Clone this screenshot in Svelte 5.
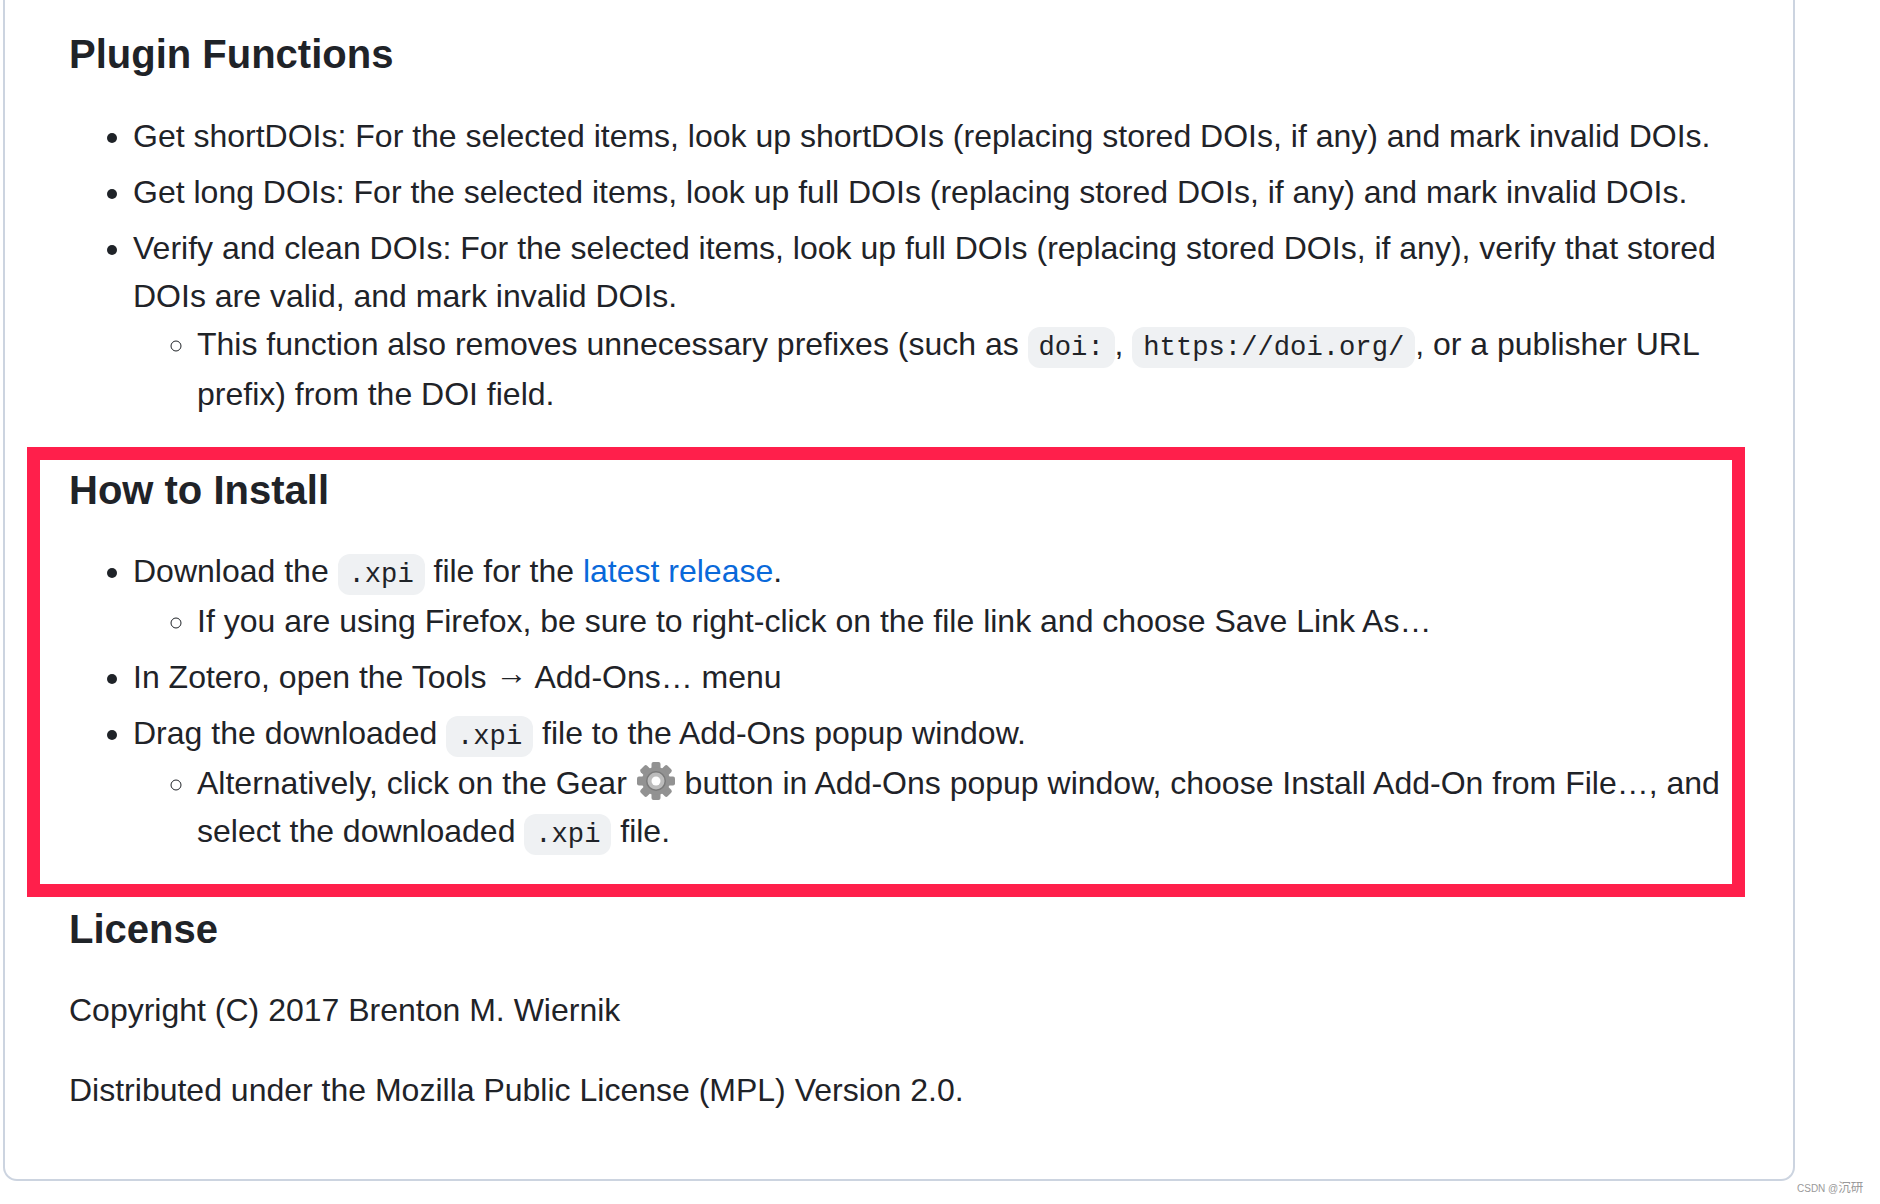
<script>
	// teeth of the gear icon, rotated around its centre
	const teeth = [0, 45, 90, 135, 180, 225, 270, 315];
</script>

<div class="page">
	<article class="card">
		<h2 class="first">Plugin Functions</h2>
		<ul>
			<li>Get shortDOIs: For the selected items, look up shortDOIs (replacing stored DOIs, if any) and mark invalid DOIs.</li>
			<li>Get long DOIs: For the selected items, look up full DOIs (replacing stored DOIs, if any) and mark invalid DOIs.</li>
			<li>
				Verify and clean DOIs: For the selected items, look up full DOIs (replacing stored DOIs, if any), verify that stored DOIs are valid, and mark invalid DOIs.
				<ul>
					<li>This function also removes unnecessary prefixes (such as <code>doi:</code>, <code>https://doi.org/</code>, or a publisher URL prefix) from the DOI field.</li>
				</ul>
			</li>
		</ul>

		<h2>How to Install</h2>
		<ul>
			<li>
				Download the <code>.xpi</code> file for the <a href="#latest">latest release</a>.
				<ul>
					<li>If you are using Firefox, be sure to right-click on the file link and choose Save Link As…</li>
				</ul>
			</li>
			<li>In Zotero, open the Tools <span class="arrow">→</span> Add-Ons… menu</li>
			<li>
				Drag the downloaded <code>.xpi</code> file to the Add-Ons popup window.
				<ul>
					<li>
						Alternatively, click on the Gear
						<svg class="gear" viewBox="0 0 40 40" aria-hidden="true">
							{#each teeth as a}
								<rect x="15.5" y="1" width="9" height="9" rx="2" fill="#929292" transform="rotate({a} 20 20)" />
							{/each}
							<circle cx="20" cy="20" r="14" fill="#929292" />
							<circle cx="20" cy="20" r="10" fill="#7a7a7a" />
							<circle cx="20" cy="20" r="8.5" fill="#bcbcbc" />
							<circle cx="20" cy="20" r="4.5" fill="#fff" />
						</svg>
						button in Add-Ons popup window, choose Install Add-On from File…, and select the downloaded <code>.xpi</code> file.
					</li>
				</ul>
			</li>
		</ul>

		<h2>License</h2>
		<p>Copyright (C) 2017 Brenton M. Wiernik</p>
		<p>Distributed under the Mozilla Public License (MPL) Version 2.0.</p>
	</article>
	<div class="highlight"></div>
	<span class="watermark">CSDN @<span class="cjk">沉研</span></span>
</div>

<style>
	:global(body) {
		background: #fff;
	}

	.page {
		position: relative;
		height: 1204px;
		overflow: hidden;
		font-family: 'Liberation Sans', Arial, sans-serif;
		color: #1f2328;
	}

	.card {
		box-sizing: border-box;
		width: 1792px;
		height: 1181px;
		margin-left: 3px;
		padding: 29px 64px 0;
		border: 2px solid #ccd4e0;
		border-top: 0;
		border-radius: 0 0 14px 14px;
		font-size: 32px;
		line-height: 48px;
	}

	h2 {
		margin: 47px 0 32px;
		font-size: 40px;
		line-height: 50px;
		font-weight: 700;
	}

	h2.first {
		margin: 0 0 33px;
	}

	p {
		margin: 0 0 32px;
	}

	ul {
		margin: 0;
		padding-left: 64px;
		list-style: disc;
	}

	ul ul {
		list-style: circle;
	}

	li {
		margin-top: 8px;
	}

	ul ul li {
		margin-top: 0;
	}

	code {
		padding: 0.2em 0.4em;
		border-radius: 12px;
		background: #eff1f3;
		font-family: 'Liberation Mono', monospace;
		font-size: 27.2px;
		line-height: 44px;
	}

	a {
		color: #0969da;
		text-decoration: none;
	}

	.arrow {
		line-height: 1;
		vertical-align: 4px;
	}

	.gear {
		width: 40px;
		height: 40px;
		vertical-align: -7px;
		filter: blur(0.4px);
	}

	.highlight {
		position: absolute;
		left: 27px;
		top: 447px;
		width: 1718px;
		height: 449.5px;
		box-sizing: border-box;
		border: 13px solid #ff1f4b;
	}

	.watermark {
		position: absolute;
		left: 1797px;
		top: 1181px;
		font-size: 10px;
		line-height: 14px;
		color: #9a9a9a;
		font-family: 'Liberation Sans', 'Noto Sans CJK SC', sans-serif;
	}

	.cjk {
		font-size: 12.5px;
	}
</style>
